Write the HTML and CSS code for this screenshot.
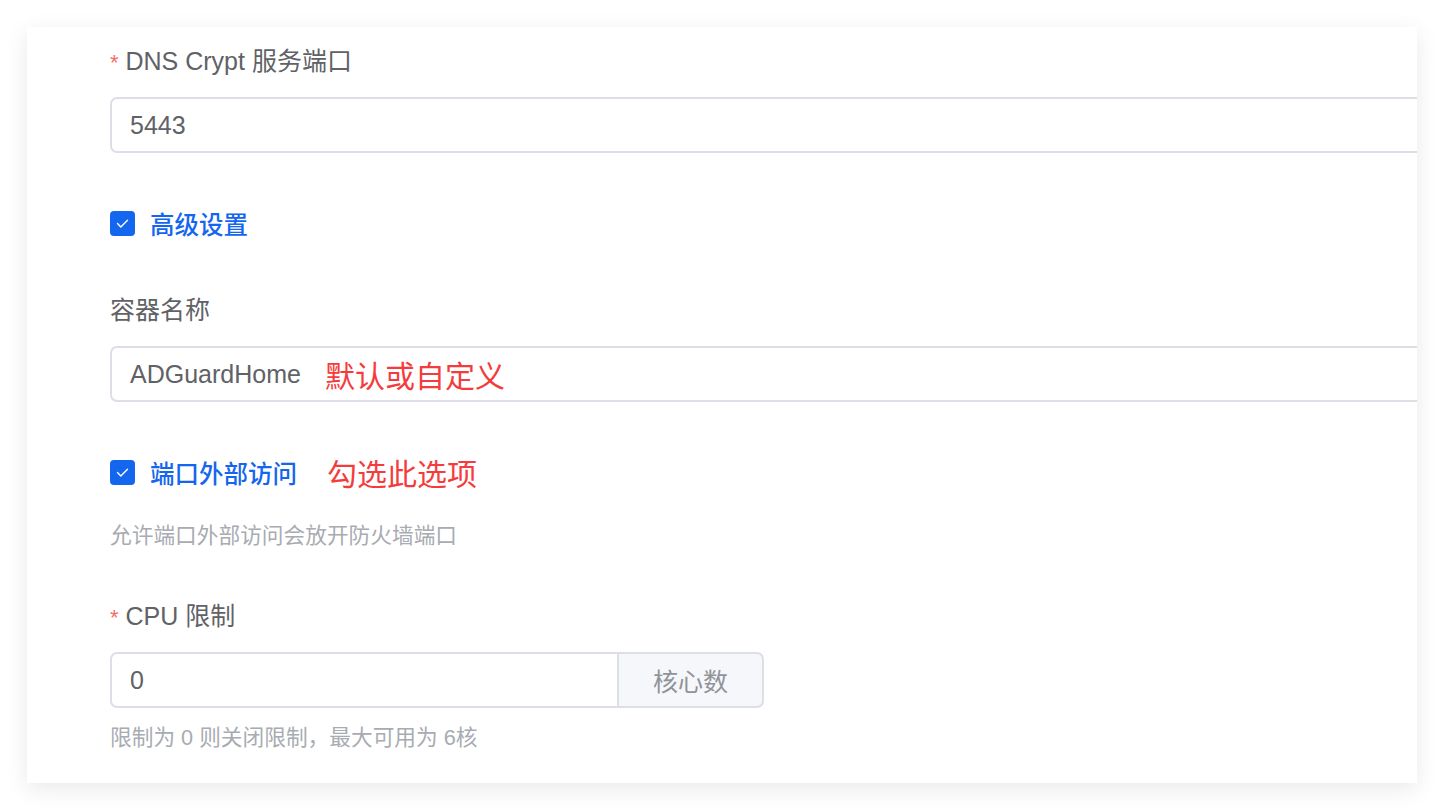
FILE: index.html
```html
<!DOCTYPE html>
<html lang="zh-CN">
<head>
<meta charset="utf-8">
<link rel="stylesheet" href="styles.css">
</head>
<body>
<div class="card">
  <div class="form">
    <div class="item">
      <div class="label"><span class="req">*</span> DNS Crypt 服务端口</div>
      <div class="input"><span class="val">5443</span></div>
    </div>

    <div class="item check-item">
      <div class="check-row">
        <span class="box"><svg viewBox="0 0 25 25" width="25" height="25"><polyline points="7.5,12.6 10.8,15.9 17.5,9.2" fill="none" stroke="#fff" stroke-width="1.4" stroke-linecap="round" stroke-linejoin="round"/></svg></span>
        <span class="check-text">高级设置</span>
      </div>
    </div>

    <div class="item item-2">
      <div class="label">容器名称</div>
      <div class="input"><span class="val">ADGuardHome</span><span class="note note-1">默认或自定义</span></div>
    </div>

    <div class="item check-item check-item-2">
      <div class="check-row">
        <span class="box"><svg viewBox="0 0 25 25" width="25" height="25"><polyline points="7.5,12.6 10.8,15.9 17.5,9.2" fill="none" stroke="#fff" stroke-width="1.4" stroke-linecap="round" stroke-linejoin="round"/></svg></span>
        <span class="check-text">端口外部访问</span>
        <span class="note note-2">勾选此选项</span>
      </div>
      <div class="hint hint-1">允许端口外部访问会放开防火墙端口</div>
    </div>

    <div class="item item-3">
      <div class="label"><span class="req">*</span> CPU 限制</div>
      <div class="group">
        <div class="input group-input"><span class="val">0</span></div>
        <div class="append">核心数</div>
      </div>
      <div class="hint hint-2">限制为 0 则关闭限制，最大可用为 6核</div>
    </div>
  </div>
</div>
</body>
</html>
```

FILE: styles.css
```css
html, body {
  margin: 0;
  padding: 0;
  background: #ffffff;
}
body {
  font-family: "Liberation Sans", "Noto Sans CJK SC", sans-serif;
  color: #606266;
  padding: 27px;
  height: 810px;
  box-sizing: border-box;
}
.card {
  width: 1390px;
  height: 756px;
  background: #fff;
  box-shadow: 0 6px 22px rgba(0, 0, 0, 0.09);
  overflow: hidden;
  box-sizing: border-box;
  padding: 6px 0 0 83px;
}
.form {
  width: 1400px;
  display: flex;
  flex-direction: column;
}
.label {
  height: 56px;
  line-height: 56px;
  font-size: 25px;
  color: #606266;
  margin-bottom: 8px;
  white-space: nowrap;
}
.req {
  color: #f56c6c;
  font-size: 22px;
}
.input {
  height: 56px;
  box-sizing: border-box;
  border: 2px solid #dcdfe6;
  border-radius: 7px;
  display: flex;
  align-items: center;
  padding-left: 18px;
  font-size: 25px;
  color: #606266;
  background: #fff;
}
.note {
  color: #f53c3c;
  font-size: 30px;
  font-family: "Noto Sans CJK SC", sans-serif;
}
.note-1 {
  margin-left: 24px;
}
.check-item {
  margin-top: 42px;
}
.check-row {
  height: 56px;
  display: flex;
  align-items: center;
}
.box {
  width: 25px;
  height: 25px;
  background: #1466ee;
  border-radius: 4px;
  display: flex;
}
.check-text {
  margin-left: 15px;
  font-size: 24.5px;
  font-weight: 500;
  color: #1466ee;
}
.note-2 {
  margin-left: 30px;
}
.item-2 {
  margin-top: 31px;
}
.hint {
  font-size: 21.7px;
  color: #a8abb2;
  line-height: 32px;
}
.hint-1 {
  margin-top: 20px;
}
.item-3 {
  margin-top: 36px;
}
.group {
  display: flex;
  width: 654px;
  height: 56px;
}
.group-input {
  flex: 1;
  border-radius: 7px 0 0 7px;
  border-right: none;
}
.append {
  width: 147px;
  box-sizing: border-box;
  border: 2px solid #dcdfe6;
  border-radius: 0 7px 7px 0;
  background: #f5f7fa;
  color: #909399;
  font-size: 25px;
  display: flex;
  align-items: center;
  justify-content: center;
}
.hint-2 {
  margin-top: 14px;
}
```
